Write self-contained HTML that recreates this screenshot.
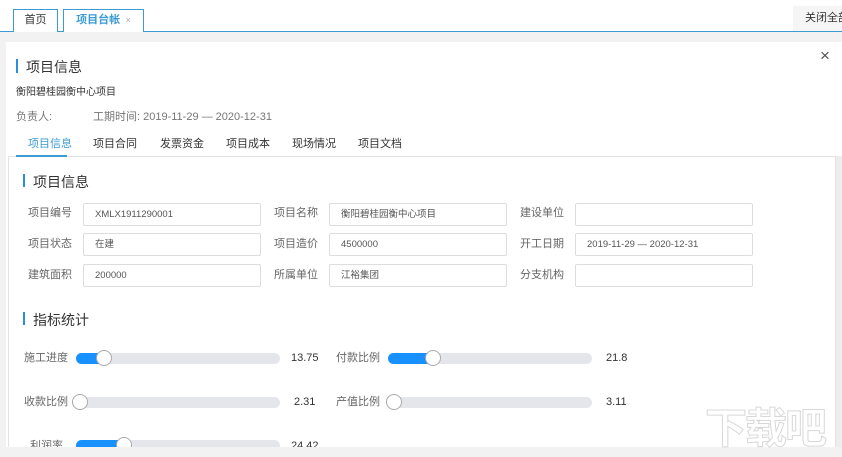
<!DOCTYPE html>
<html><head><meta charset="utf-8"><style>
*{margin:0;padding:0;box-sizing:border-box}
body{width:842px;height:457px;overflow:hidden;background:#f2f2f2;font-family:"Liberation Sans","Noto Sans CJK SC",sans-serif;color:#333;position:relative;font-size:11px}
.abs{position:absolute;white-space:nowrap}
.top{left:0;top:0;width:842px;height:32px;background:#fff;border-bottom:1px solid #3a9bd5}
.tab{top:9px;height:23px;border:1px solid #3a9bd5;border-bottom:none;background:#fff;font-size:11px;line-height:21px;text-align:center}
.panel{left:6px;top:42px;width:836px;height:405px;background:#fff}
.lbl{font-size:11px;color:#666;line-height:13px}
.inp{height:23px;border:1px solid #ddd;border-radius:2px;font-size:9.5px;color:#555;line-height:21px;padding-left:11px}
.track{height:11px;border-radius:6px;background:#e4e6eb}
.fill{position:absolute;left:0;top:0;height:11px;border-radius:6px;background:#1890ff}
.knob{position:absolute;top:-3px;width:16px;height:16px;border-radius:50%;background:#fff;border:1px solid #aaa}
.val{font-size:11px;color:#333;line-height:13px}
</style></head><body>
<div class="abs top"></div>
<div class="abs tab" style="left:13px;width:45px;color:#333">首页</div>
<div class="abs tab" style="left:63px;width:81px;color:#3a9bd5;font-weight:bold">项目台帐 <span style="color:#aaa;font-weight:normal;font-size:9px">&nbsp;×</span></div>
<div class="abs" style="left:793px;top:6px;width:49px;height:25px;background:#f5f5f5;font-size:11px;line-height:25px;padding-left:12px;overflow:hidden">关闭全部</div>
<div class="abs panel"></div>
<div class="abs" style="left:820px;top:46px;font-size:17px;color:#555;font-weight:300">×</div>
<div class="abs" style="left:16px;top:59px;width:2px;height:14px;background:#2d8fd6"></div>
<div class="abs" style="left:26px;top:57px;font-size:14px;color:#333">项目信息</div>
<div class="abs" style="left:16px;top:83px;font-size:10px;color:#333">衡阳碧桂园衡中心项目</div>
<div class="abs" style="left:16px;top:108px;font-size:11px;color:#777">负责人:</div>
<div class="abs" style="left:93px;top:108px;font-size:11px;color:#777">工期时间: 2019-11-29 — 2020-12-31</div>
<div class="abs" style="left:28px;top:135px;font-size:11px;color:#3a9bd5">项目信息</div>
<div class="abs" style="left:93px;top:135px;font-size:11px">项目合同</div>
<div class="abs" style="left:160px;top:135px;font-size:11px">发票资金</div>
<div class="abs" style="left:226px;top:135px;font-size:11px">项目成本</div>
<div class="abs" style="left:292px;top:135px;font-size:11px">现场情况</div>
<div class="abs" style="left:358px;top:135px;font-size:11px">项目文档</div>
<div class="abs" style="left:8px;top:156px;width:828px;height:300px;border:1px solid #e3e3e3;border-bottom:none;background:#fff"></div>
<div class="abs" style="left:16px;top:155px;width:51px;height:2px;background:#3a9bd5"></div>
<div class="abs" style="left:836px;top:156px;width:6px;height:291px;background:#eee"></div>
<div class="abs" style="left:23px;top:174px;width:2px;height:13px;background:#2d8fd6"></div>
<div class="abs" style="left:33px;top:172px;font-size:14px">项目信息</div>

<div class="abs lbl" style="left:28px;top:207px">项目编号</div>
<div class="abs inp" style="left:83px;top:203px;width:178px">XMLX1911290001</div>
<div class="abs lbl" style="left:274px;top:207px">项目名称</div>
<div class="abs inp" style="left:329px;top:203px;width:178px">衡阳碧桂园衡中心项目</div>
<div class="abs lbl" style="left:520px;top:207px">建设单位</div>
<div class="abs inp" style="left:575px;top:203px;width:178px"></div>

<div class="abs lbl" style="left:28px;top:238px">项目状态</div>
<div class="abs inp" style="left:83px;top:233px;width:178px">在建</div>
<div class="abs lbl" style="left:274px;top:238px">项目造价</div>
<div class="abs inp" style="left:329px;top:233px;width:178px">4500000</div>
<div class="abs lbl" style="left:520px;top:238px">开工日期</div>
<div class="abs inp" style="left:575px;top:233px;width:178px">2019-11-29 — 2020-12-31</div>

<div class="abs lbl" style="left:28px;top:269px">建筑面积</div>
<div class="abs inp" style="left:83px;top:264px;width:178px">200000</div>
<div class="abs lbl" style="left:274px;top:269px">所属单位</div>
<div class="abs inp" style="left:329px;top:264px;width:178px">江裕集团</div>
<div class="abs lbl" style="left:520px;top:269px">分支机构</div>
<div class="abs inp" style="left:575px;top:264px;width:178px"></div>

<div class="abs" style="left:23px;top:312px;width:2px;height:13px;background:#2d8fd6"></div>
<div class="abs" style="left:33px;top:310px;font-size:14px">指标统计</div>

<div class="abs lbl" style="left:24px;top:352px">施工进度</div>
<div class="abs track" style="left:76px;top:353px;width:204px"><div class="fill" style="width:30px"></div><div class="knob" style="left:20px"></div></div>
<div class="abs val" style="left:291px;top:352px">13.75</div>
<div class="abs lbl" style="left:336px;top:352px">付款比例</div>
<div class="abs track" style="left:388px;top:353px;width:204px"><div class="fill" style="width:48px"></div><div class="knob" style="left:37px"></div></div>
<div class="abs val" style="left:606px;top:352px">21.8</div>

<div class="abs lbl" style="left:24px;top:396px">收款比例</div>
<div class="abs track" style="left:72px;top:397px;width:208px"><div class="knob" style="left:0"></div></div>
<div class="abs val" style="left:294px;top:396px">2.31</div>
<div class="abs lbl" style="left:336px;top:396px">产值比例</div>
<div class="abs track" style="left:386px;top:397px;width:206px"><div class="knob" style="left:0"></div></div>
<div class="abs val" style="left:606px;top:396px">3.11</div>

<div class="abs lbl" style="left:30px;top:440px">利润率</div>
<div class="abs track" style="left:76px;top:440px;width:204px"><div class="fill" style="width:50px"></div><div class="knob" style="left:40px"></div></div>
<div class="abs val" style="left:291px;top:440px">24.42</div>
<div class="abs" style="left:0;top:447px;width:842px;height:10px;background:#f2f2f2"></div>
<div class="abs" style="left:705px;top:395px;font-size:42px;color:transparent;-webkit-text-stroke:1px #d8d8d8;font-weight:bold;letter-spacing:-2px">下载吧</div>
</body></html>
